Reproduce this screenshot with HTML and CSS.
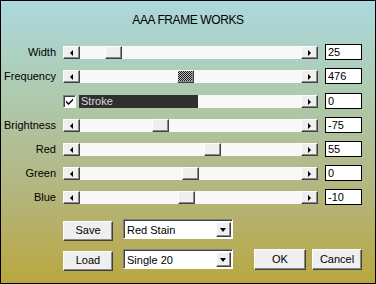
FILE: index.html
```html
<html>

<head>
    <title>AAA Frame Works</title>
    <link rel="stylesheet" href="styles.css">
</head>

<body>
    <div class="dialog">
        <div class="title">AAA FRAME WORKS</div>

        <div class="rows">
            <div class="row">
                <span class="label">Width</span>
                <div class="slider">
                    <span class="btn arrow left"></span>
                    <div class="track"><span class="btn thumb" style="margin-left:25px"></span></div>
                    <span class="btn arrow right"></span>
                </div>
                <span class="field">25</span>
            </div>
            <div class="row">
                <span class="label">Frequency</span>
                <div class="slider">
                    <span class="btn arrow left"></span>
                    <div class="track"><span class="btn thumb focus" style="margin-left:97px"></span></div>
                    <span class="btn arrow right"></span>
                </div>
                <span class="field">476</span>
            </div>
            <div class="row stroke">
                <span class="label"></span>
                <div class="slider">
                    <span class="check">
                        <svg width="9" height="9" viewBox="0 0 9 9"><path d="M1 3.5 L3.5 6 L8 1.5 L8 3.5 L3.5 8 L1 5.5 Z" fill="#000"/></svg>
                    </span>
                    <span class="stroke-name">Stroke</span>
                    <div class="track"></div>
                    <span class="btn arrow right"></span>
                </div>
                <span class="field">0</span>
            </div>
            <div class="row">
                <span class="label">Brightness</span>
                <div class="slider">
                    <span class="btn arrow left"></span>
                    <div class="track"><span class="btn thumb" style="margin-left:72px"></span></div>
                    <span class="btn arrow right"></span>
                </div>
                <span class="field">-75</span>
            </div>
            <div class="row">
                <span class="label">Red</span>
                <div class="slider">
                    <span class="btn arrow left"></span>
                    <div class="track"><span class="btn thumb" style="margin-left:124px"></span></div>
                    <span class="btn arrow right"></span>
                </div>
                <span class="field">55</span>
            </div>
            <div class="row">
                <span class="label">Green</span>
                <div class="slider">
                    <span class="btn arrow left"></span>
                    <div class="track"><span class="btn thumb" style="margin-left:102px"></span></div>
                    <span class="btn arrow right"></span>
                </div>
                <span class="field">0</span>
            </div>
            <div class="row">
                <span class="label">Blue</span>
                <div class="slider">
                    <span class="btn arrow left"></span>
                    <div class="track"><span class="btn thumb" style="margin-left:98px"></span></div>
                    <span class="btn arrow right"></span>
                </div>
                <span class="field">-10</span>
            </div>
        </div>

        <div class="actions">
            <div class="action-row">
                <span class="btn push small">Save</span>
                <div class="combo">
                    <span class="combo-text">Red Stain</span>
                    <span class="btn combo-btn"></span>
                </div>
            </div>
            <div class="action-row">
                <span class="btn push small">Load</span>
                <div class="combo">
                    <span class="combo-text">Single 20</span>
                    <span class="btn combo-btn"></span>
                </div>
                <span class="btn push big ok">OK</span>
                <span class="btn push big cancel">Cancel</span>
            </div>
        </div>
    </div>
</body>

</html>
```

FILE: styles.css
```css
body {
    margin: 0;
    font-family: 'Liberation Sans', Arial, sans-serif;
    font-size: 11px;
    color: #000;
}

.dialog {
    box-sizing: border-box;
    width: 376px;
    height: 284px;
    border: 1px solid #000;
    background: linear-gradient(to bottom, #acd8de 0%, #aecbb0 32%, #b0c09a 48%, #b4b47a 70%, #b9a740 100%);
}

.title {
    height: 39px;
    padding-top: 12px;
    box-sizing: border-box;
    text-align: center;
    font-size: 12px;
    line-height: 14px;
    letter-spacing: -0.4px;
}

/* slider rows */

.row {
    display: grid;
    grid-template-columns: 55px 255px 37px;
    column-gap: 7px;
    height: 24px;
    align-items: start;
}

.row.stroke {
    margin-top: 1px;
}

.label {
    text-align: right;
    margin-top: 6px;
    line-height: 13px;
}

.slider {
    display: flex;
    height: 13px;
    margin-top: 6px;
}

.track {
    flex: 1;
    display: flex;
    background: repeating-conic-gradient(#f1f1f1 0 25%, #fff 0 50%) 0 0 / 2px 2px;
}

.btn {
    box-sizing: border-box;
    display: inline-block;
    background-color: #efefef;
    border-top: 1px solid #fff;
    border-left: 1px solid #fff;
    border-right: 1px solid #404040;
    border-bottom: 1px solid #404040;
    box-shadow: inset -1px -1px 0 #8a8a8a;
}

.arrow {
    width: 17px;
    height: 13px;
    position: relative;
}

.arrow:after {
    content: '';
    position: absolute;
    top: 3px;
    left: 6px;
    border-top: 3px solid transparent;
    border-bottom: 3px solid transparent;
}

.arrow.left:after {
    border-right: 3px solid #000;
}

.arrow.right:after {
    border-left: 3px solid #000;
}

.thumb {
    width: 17px;
    height: 13px;
}

.thumb.focus {
    background: repeating-conic-gradient(#1a1a1a 0 25%, #bdbdbd 0 50%) 0 0 / 2px 2px;
}

.field {
    box-sizing: border-box;
    height: 16px;
    margin-top: 4px;
    padding-left: 2px;
    border: 1px solid #000;
    background-color: #fff;
    line-height: 14px;
}

.check {
    box-sizing: border-box;
    width: 13px;
    height: 13px;
    display: flex;
    align-items: center;
    justify-content: center;
    background-color: #fff;
    border-top: 1px solid #808080;
    border-left: 1px solid #808080;
    border-right: 1px solid #fff;
    border-bottom: 1px solid #fff;
    box-shadow: inset 1px 1px 0 #404040;
}

.stroke-name {
    width: 119px;
    margin-left: 3px;
    padding-left: 2px;
    box-sizing: border-box;
    background-color: #2f2f2f;
    color: #d8d8d8;
    line-height: 13px;
}

/* bottom buttons */

.actions {
    margin-top: 10px;
    padding-left: 62px;
}

.action-row {
    display: flex;
    align-items: flex-start;
    height: 20px;
    margin-bottom: 10px;
}

.push {
    text-align: center;
    line-height: 17px;
}

.push.small {
    width: 50px;
    height: 20px;
    margin-top: 2px;
    margin-right: 10px;
}

.push.big {
    height: 21px;
    line-height: 19px;
}

.ok {
    width: 52px;
    margin-left: 21px;
}

.cancel {
    width: 50px;
    margin-left: 6px;
}

.combo {
    box-sizing: border-box;
    width: 110px;
    height: 20px;
    display: flex;
    align-items: center;
    padding: 2px 1px 1px 3px;
    background-color: #fff;
    border-top: 1px solid #808080;
    border-left: 1px solid #808080;
    border-right: 1px solid #fff;
    border-bottom: 1px solid #fff;
    box-shadow: inset 1px 1px 0 #404040;
}

.combo-text {
    flex: 1;
}

.combo-btn {
    width: 15px;
    height: 15px;
    position: relative;
}

.combo-btn:after {
    content: '';
    position: absolute;
    top: 5px;
    left: 3px;
    border-left: 3.5px solid transparent;
    border-right: 3.5px solid transparent;
    border-top: 4px solid #000;
}
```
